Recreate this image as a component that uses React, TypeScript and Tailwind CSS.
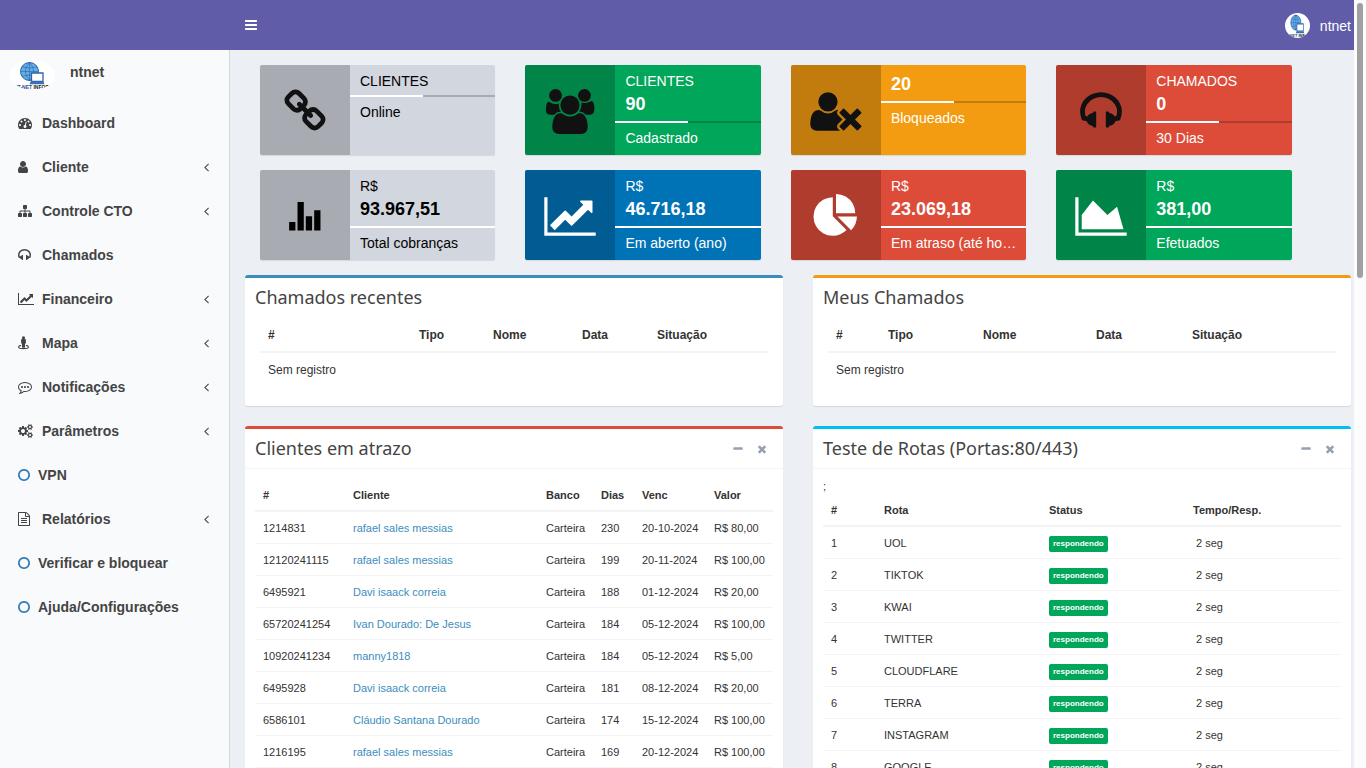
import type { ReactNode } from "react";
import clsx from "clsx";

// Font Awesome 4 glyphs, on a 1792 unit em
const glyphs = {
  bars: {
    box: "128 0 1536 1792",
    d: "M1664 1344v128q0 26-19 45t-45 19h-1408q-26 0-45-19t-19-45v-128q0-26 19-45t45-19h1408q26 0 45 19t19 45zm0-512v128q0 26-19 45t-45 19h-1408q-26 0-45-19t-19-45v-128q0-26 19-45t45-19h1408q26 0 45 19t19 45zm0-512v128q0 26-19 45t-45 19h-1408q-26 0-45-19t-19-45v-128q0-26 19-45t45-19h1408q26 0 45 19t19 45z",
  },
  dashboard: {
    box: "0 0 1792 1792",
    d: "M384 1152q0-53-37.5-90.5t-90.5-37.5-90.5 37.5-37.5 90.5 37.5 90.5 90.5 37.5 90.5-37.5 37.5-90.5zm192-448q0-53-37.5-90.5t-90.5-37.5-90.5 37.5-37.5 90.5 37.5 90.5 90.5 37.5 90.5-37.5 37.5-90.5zm428 481l101-382q6-26-7.5-48.5t-38.5-29.5-48 6.5-30 39.5l-101 382q-60 5-107 43.5t-63 98.5q-20 77 20 146t117 89 146-20 89-117q16-60-6-117t-72-91zm660-33q0-53-37.5-90.5t-90.5-37.5-90.5 37.5-37.5 90.5 37.5 90.5 90.5 37.5 90.5-37.5 37.5-90.5zm-640-640q0-53-37.5-90.5t-90.5-37.5-90.5 37.5-37.5 90.5 37.5 90.5 90.5 37.5 90.5-37.5 37.5-90.5zm448 192q0-53-37.5-90.5t-90.5-37.5-90.5 37.5-37.5 90.5 37.5 90.5 90.5 37.5 90.5-37.5 37.5-90.5zm320 448q0 261-141 483-19 29-54 29h-1402q-35 0-54-29-141-221-141-483 0-182 71-348t191-286 286-191 348-71 348 71 286 191 191 286 71 348z",
  },
  user: {
    box: "256 0 1280 1792",
    d: "M1536 1399q0 109-62.5 187t-150.5 78h-854q-88 0-150.5-78t-62.5-187q0-85 8.5-160.5t31.5-152 58.5-131 94-89 134.5-34.5q131 128 313 128t313-128q76 0 134.5 34.5t94 89 58.5 131 31.5 152 8.5 160.5zm-256-887q0 159-112.5 271.5t-271.5 112.5-271.5-112.5-112.5-271.5 112.5-271.5 271.5-112.5 271.5 112.5 112.5 271.5z",
  },
  sitemap: {
    box: "0 0 1792 1792",
    d: "M1792 1248v320q0 40-28 68t-68 28h-320q-40 0-68-28t-28-68v-320q0-40 28-68t68-28h96v-192h-512v192h96q40 0 68 28t28 68v320q0 40-28 68t-68 28h-320q-40 0-68-28t-28-68v-320q0-40 28-68t68-28h96v-192h-512v192h96q40 0 68 28t28 68v320q0 40-28 68t-68 28h-320q-40 0-68-28t-28-68v-320q0-40 28-68t68-28h96v-192q0-52 38-90t90-38h512v-192h-96q-40 0-68-28t-28-68v-320q0-40 28-68t68-28h320q40 0 68 28t28 68v320q0 40-28 68t-68 28h-96v192h512q52 0 90 38t38 90v192h96q40 0 68 28t28 68z",
  },
  headphones: {
    box: "64 0 1664 1792",
    d: "M1728 886q0 166-60 314l-20 49-185 33q-22 83-90.5 136.5t-156.5 53.5v32q0 14-9 23t-23 9h-64q-14 0-23-9t-9-23v-576q0-14 9-23t23-9h64q14 0 23 9t9 23v32q71 0 130 35.5t93 95.5l68-12q29-95 29-193 0-148-88-279t-236.5-209-315.5-78-315.5 78-236.5 209-88 279q0 98 29 193l68 12q34-60 93-95.5t130-35.5v-32q0-14 9-23t23-9h64q14 0 23 9t9 23v576q0 14-9 23t-23 9h-64q-14 0-23-9t-9-23v-32q-88 0-156.5-53.5t-90.5-136.5l-185-33-20-49q-60-148-60-314 0-151 67-291t179-242.5 266-163.5 320-61 320 61 266 163.5 179 242.5 67 291z",
  },
  lineChart: {
    box: "0 0 2048 1792",
    d: "M2048 1536v128h-2048v-1536h128v1408h1920zm-128-1248v435q0 21-19.5 29.5t-35.5-7.5l-121-121-633 633q-10 10-23 10t-23-10l-233-233-416 416-192-192 585-585q10-10 23-10t23 10l233 233 464-464-121-121q-16-16-7.5-35.5t29.5-19.5h435q14 0 23 9t9 23z",
  },
  areaChart: {
    box: "0 0 2048 1792",
    d: "M2048 1536v128h-2048v-1536h128v1408h1920zm-384-1024l256 896h-1664v-576l448-576 576 576z",
  },
  pieChart: {
    box: "0 0 1792 1792",
    d: "M768 890l546 546q-106 108-247.5 168t-298.5 60q-209 0-385.5-103t-279.5-279.5-103-385.5 103-385.5 279.5-279.5 385.5-103v762zm187 6h773q0 157-60 298.5t-168 247.5zm709-128h-768v-768q209 0 385.5 103t279.5 279.5 103 385.5z",
  },
  streetView: {
    box: "0 0 1408 1792",
    d: "M704 20a200 200 0 0 1 130 350h70q104 0 104 104v416q0 90-110 100v440q0 60-60 60h-268q-60 0-60-60v-440q-110-10-110-100v-416q0-104 104-104h70a200 200 0 0 1 130-350zM400 1130v140q-262 40-262 130 0 150 566 150t566-150q0-90-262-130v-140q400 60 400 270 0 282-704 282t-704-282q0-210 400-270z",
  },
  commenting: {
    box: "0 0 1792 1792",
    d: "M640 896q0 53-37.5 90.5t-90.5 37.5-90.5-37.5-37.5-90.5 37.5-90.5 90.5-37.5 90.5 37.5 37.5 90.5zm384 0q0 53-37.5 90.5t-90.5 37.5-90.5-37.5-37.5-90.5 37.5-90.5 90.5-37.5 90.5 37.5 37.5 90.5zm384 0q0 53-37.5 90.5t-90.5 37.5-90.5-37.5-37.5-90.5 37.5-90.5 90.5-37.5 90.5 37.5 37.5 90.5zm-512-512q-204 0-381.5 69.5t-282 187.5-104.5 255q0 112 71.5 213.5t201.5 175.5l87 50-27 96q-24 91-70 172 152-63 275-171l43-38 57 6q69 8 130 8 204 0 381.5-69.5t282-187.5 104.5-255-104.5-255-282-187.5-381.5-69.5zm896 512q0 174-120 321.5t-326 233-450 85.5q-70 0-145-8-198 175-460 242-49 14-114 22h-5q-15 0-27-10.5t-16-27.5v-1q-3-4-.5-12t2-10 4.5-9.5l6-9 7-8.5 8-9q7-8 31-34.5t34.5-38 31-39.5 32.5-51 27-59 26-76q-157-89-247.5-220t-90.5-281q0-174 120-321.5t326-233 450-85.5 450 85.5 326 233 120 321.5z",
  },
  cogs: {
    box: "0 0 1920 1792",
    d: "M896 896q0-106-75-181t-181-75-181 75-75 181 75 181 181 75 181-75 75-181zm768 512q0-52-38-90t-90-38-90 38-38 90q0 53 37.5 90.5t90.5 37.5 90.5-37.5 37.5-90.5zm0-1024q0-52-38-90t-90-38-90 38-38 90q0 53 37.5 90.5t90.5 37.5 90.5-37.5 37.5-90.5zm-384 421v185q0 10-7 19.5t-16 10.5l-155 24q-11 35-32 76 34 48 90 115 7 11 7 20 0 12-7 19-23 30-82.5 89.5t-78.5 59.5q-11 0-21-7l-115-90q-37 19-77 31-11 108-23 155-7 24-30 24h-186q-11 0-20-7.5t-10-17.5l-23-153q-34-10-75-31l-118 89q-7 7-20 7-11 0-21-8-144-133-144-160 0-9 7-19 10-14 41-53t47-61q-23-44-35-82l-152-24q-10-1-17-9.5t-7-19.5v-185q0-10 7-19.5t16-10.5l155-24q11-35 32-76-34-48-90-115-7-11-7-20 0-12 7-20 22-30 82-89t79-59q11 0 21 7l115 90q34-18 77-32 11-108 23-154 7-24 30-24h186q11 0 20 7.5t10 17.5l23 153q34 10 75 31l118-89q8-7 20-7 11 0 21 8 144 133 144 160 0 8-7 19-12 16-42 54t-45 60q23 48 34 82l152 23q10 2 17 10.5t7 19.5zm640 533v140q0 16-149 31-12 27-30 52 51 113 51 138 0 4-4 7-122 71-124 71-8 0-46-47t-52-68q-20 2-30 2t-30-2q-14 21-52 68t-46 47q-2 0-124-71-4-3-4-7 0-25 51-138-18-25-30-52-149-15-149-31v-140q0-16 149-31 13-29 30-52-51-113-51-138 0-4 4-7 4-2 35-20t59-34 30-16q8 0 46 46.5t52 67.5q20-2 30-2t30 2q51-71 92-112l6-2q4 0 124 70 4 3 4 7 0 25-51 138 17 23 30 52 149 15 149 31zm0-1024v140q0 16-149 31-12 27-30 52 51 113 51 138 0 4-4 7-122 71-124 71-8 0-46-47t-52-68q-20 2-30 2t-30-2q-14 21-52 68t-46 47q-2 0-124-71-4-3-4-7 0-25 51-138-18-25-30-52-149-15-149-31v-140q0-16 149-31 13-29 30-52-51-113-51-138 0-4 4-7 4-2 35-20t59-34 30-16q8 0 46 46.5t52 67.5q20-2 30-2t30 2q51-71 92-112l6-2q4 0 124 70 4 3 4 7 0 25-51 138 17 23 30 52 149 15 149 31z",
  },
  circle: {
    box: "128 0 1536 1792",
    d: "M896 352q-148 0-273 73t-198 198-73 273 73 273 198 198 273 73 273-73 198-198 73-273-73-273-198-198-273-73zm768 544q0 209-103 385.5t-279.5 279.5-385.5 103-385.5-103-279.5-279.5-103-385.5 103-385.5 279.5-279.5 385.5-103 385.5 103 279.5 279.5 103 385.5z",
  },
  fileText: {
    box: "128 0 1536 1792",
    d: "M1596 380q28 28 48 76t20 88v1152q0 40-28 68t-68 28h-1344q-40 0-68-28t-28-68v-1600q0-40 28-68t68-28h896q40 0 88 20t76 48zm-444-244v376h376q-10-29-22-41l-313-313q-12-12-41-22zm384 1528v-1024h-416q-40 0-68-28t-28-68v-416h-768v1536h1280zm-1024-864q0-14 9-23t23-9h704q14 0 23 9t9 23v64q0 14-9 23t-23 9h-704q-14 0-23-9t-9-23v-64zm736 224q14 0 23 9t9 23v64q0 14-9 23t-23 9h-704q-14 0-23-9t-9-23v-64q0-14 9-23t23-9h704zm0 256q14 0 23 9t9 23v64q0 14-9 23t-23 9h-704q-14 0-23-9t-9-23v-64q0-14 9-23t23-9h704z",
  },
  link: {
    box: "64 0 1664 1792",
    d: "M1520 1216q0-40-28-68l-208-208q-28-28-68-28-42 0-72 32 3 3 19 18.5t21.5 21.5 15 19 13 25.5 3.5 27.5q0 40-28 68t-68 28q-15 0-27.5-3.5t-25.5-13-19-15-21.5-21.5-18.5-19q-33 31-33 73 0 40 28 68l206 207q27 27 68 27 40 0 68-26l147-146q28-28 28-67zm-703-705q0-40-28-68l-206-207q-28-28-68-28-39 0-68 27l-147 146q-28 28-28 67 0 40 28 68l208 208q27 27 68 27 42 0 72-31-3-3-19-18.5t-21.5-21.5-15-19-13-25.5-3.5-27.5q0-40 28-68t68-28q15 0 27.5 3.5t25.5 13 19 15 21.5 21.5 18.5 19q33-31 33-73zm895 705q0 120-85 203l-147 146q-83 83-203 83-121 0-204-85l-206-207q-83-83-83-203 0-123 88-209l-88-88q-86 88-208 88-120 0-204-84l-208-208q-84-84-84-204t85-203l147-146q83-83 203-83 121 0 204 85l206 207q83 83 83 203 0 123-88 209l88 88q86-88 208-88 120 0 204 84l208 208q84 84 84 204z",
  },
  users: {
    box: "0 0 1920 1792",
    d: "M593 896q-162 5-265 128h-134q-82 0-138-40.5t-56-118.5q0-353 124-353 6 0 43.5 21t97.5 42.5 119 21.5q67 0 133-23-5 37-5 66 0 159 93 293zm1071 637q0 120-73 189.5t-194 69.5h-874q-121 0-194-69.5t-73-189.5q0-53 3.5-103.5t14-109 26.5-108.5 43-97.5 62-81 85.5-53.5 111.5-20q10 0 43 21.5t73 48 107 48 135 21.5 135-21.5 107-48 73-48 43-21.5q61 0 111.5 20t85.5 53.5 62 81 43 97.5 26.5 108.5 14 109 3.5 103.5zm-1024-1277q0 106-75 181t-181 75-181-75-75-181 75-181 181-75 181 75 75 181zm704 384q0 159-112.5 271.5t-271.5 112.5-271.5-112.5-112.5-271.5 112.5-271.5 271.5-112.5 271.5 112.5 112.5 271.5zm576 225q0 78-56 118.5t-138 40.5h-134q-103-123-265-128 93-134 93-293 0-29-5-66 66 23 133 23 59 0 119-21.5t97.5-42.5 43.5-21q124 0 124 353zm-128-609q0 106-75 181t-181 75-181-75-75-181 75-181 181-75 181 75 75 181z",
  },
  userTimes: {
    box: "0 0 2048 1792",
    d: "M704 896q-159 0-271.5-112.5t-112.5-271.5 112.5-271.5 271.5-112.5 271.5 112.5 112.5 271.5-112.5 271.5-271.5 112.5zm1077 320l249 249q9 9 9 23 0 13-9 22l-136 136q-9 9-22 9-14 0-23-9l-249-249-249 249q-9 9-23 9-13 0-22-9l-136-136q-9-9-9-22 0-14 9-23l249-249-249-249q-9-9-9-23 0-13 9-22l136-136q9-9 22-9 14 0 23 9l249 249 249-249q9-9 23-9 13 0 22 9l136 136q9 9 9 22 0 14-9 23zm-498 0l-181 181q-37 37-37 91 0 53 37 90l83 83q-21 3-44 3h-874q-121 0-194-69t-73-190q0-53 3.5-103.5t14-109 26.5-108.5 43-97.5 62-81 85.5-53.5 111.5-20q19 0 39 17 154 122 319 122t319-122q20-17 39-17 28 0 57 6-28 27-41 50t-13 56q0 54 37 91z",
  },
  statsBars: {
    box: "0 0 1792 1792",
    d: "M264 1116h250v342h-250zM598 318h250v1140h-250zM928 888h250v570h-250zM1262 648h250v810h-250z",
  },
  angleLeft: {
    box: "582 0 640 1792",
    d: "M1203 544q0 13-10 23l-393 393 393 393q10 10 10 23t-10 23l-50 50q-10 10-23 10t-23-10l-466-466q-10-10-10-23t10-23l466-466q10-10 23-10t23 10l50 50q10 10 10 23z",
  },
  minus: {
    box: "0 0 1792 1792",
    d: "M1600 736v192q0 40-28 68t-68 28h-1216q-40 0-68-28t-28-68v-192q0-40 28-68t68-28h1216q40 0 68 28t28 68z",
  },
  times: {
    box: "0 0 1792 1792",
    d: "M1490 1322q0 40-28 68l-136 136q-28 28-68 28t-68-28l-294-294-294 294q-28 28-68 28t-68-28l-136-136q-28-28-28-68t28-68l294-294-294-294q-28-28-28-68t28-68l136-136q28-28 68-28t68 28l294 294 294-294q28-28 68-28t68 28l136 136q28 28 28 68t-28 68l-294 294 294 294q28 28 28 68z",
  },
};

type Glyph = keyof typeof glyphs;

function Icon({ name, className, left }: { name: Glyph; className?: string; left?: boolean }) {
  return (
    <svg
      viewBox={glyphs[name].box}
      preserveAspectRatio={left ? "xMinYMid meet" : "xMidYMid meet"}
      className={clsx("shrink-0 overflow-visible fill-current", className)}
      aria-hidden="true"
    >
      <path d={glyphs[name].d} />
    </svg>
  );
}

function GlobeAndLaptop() {
  return (
    <g>
      <circle cx="19.5" cy="11.5" r="9" fill="#62b0e8" stroke="#2d62a3" strokeWidth="1" />
      <path
        d="M19.5 2.5v18M10.5 11.5h18M12 6.8q7.5 2.4 15 0M12 16.2q7.5-2.4 15 0M19.5 2.5q-8.500 9 0 18M19.5 2.5q8.5 9 0 18"
        fill="none"
        stroke="#2d62a3"
        strokeWidth="0.6"
      />
      <path d="M21.5 13h11.5v8.5h-11.5z" fill="#fff" stroke="#2f64ae" strokeWidth="1.3" />
      <path d="M20.5 21.8h13l1 2.400h-15z" fill="#3a70b8" />
    </g>
  );
}

const navItems: { label: string; icon: Glyph; tree?: boolean }[] = [
  { label: "Dashboard", icon: "dashboard" },
  { label: "Cliente", icon: "user", tree: true },
  { label: "Controle CTO", icon: "sitemap", tree: true },
  { label: "Chamados", icon: "headphones" },
  { label: "Financeiro", icon: "lineChart", tree: true },
  { label: "Mapa", icon: "streetView", tree: true },
  { label: "Notificações", icon: "commenting", tree: true },
  { label: "Parâmetros", icon: "cogs", tree: true },
  { label: "VPN", icon: "circle" },
  { label: "Relatórios", icon: "fileText", tree: true },
  { label: "Verificar e bloquear", icon: "circle" },
  { label: "Ajuda/Configurações", icon: "circle" },
];

interface InfoCard {
  icon: Glyph;
  title?: string;
  value?: string;
  description: string;
  color: string;
  iconColor: string;
  progress: string;
}

const infoCards: InfoCard[] = [
  { icon: "link", title: "CLIENTES", description: "Online", color: "bg-[#d2d6de] text-black", iconColor: "text-[#111]", progress: "w-1/2" },
  { icon: "users", title: "CLIENTES", value: "90", description: "Cadastrado", color: "bg-[#00a65a] text-white", iconColor: "text-[#111]", progress: "w-1/2" },
  { icon: "userTimes", value: "20", description: "Bloqueados", color: "bg-[#f39c12] text-white", iconColor: "text-[#111]", progress: "w-1/2" },
  { icon: "headphones", title: "CHAMADOS", value: "0", description: "30 Dias", color: "bg-[#dd4b39] text-white", iconColor: "text-[#111]", progress: "w-1/2" },
  { icon: "statsBars", title: "R$", value: "93.967,51", description: "Total cobranças", color: "bg-[#d2d6de] text-black", iconColor: "text-black", progress: "w-full" },
  { icon: "lineChart", title: "R$", value: "46.716,18", description: "Em aberto (ano)", color: "bg-[#0073b7] text-white", iconColor: "text-white", progress: "w-full" },
  { icon: "pieChart", title: "R$", value: "23.069,18", description: "Em atraso (até hoje)", color: "bg-[#dd4b39] text-white", iconColor: "text-white", progress: "w-full" },
  { icon: "areaChart", title: "R$", value: "381,00", description: "Efetuados", color: "bg-[#00a65a] text-white", iconColor: "text-white", progress: "w-full" },
];

const overdue = [
  ["1214831", "rafael sales messias", "Carteira", "230", "20-10-2024", "R$ 80,00"],
  ["12120241115", "rafael sales messias", "Carteira", "199", "20-11-2024", "R$ 100,00"],
  ["6495921", "Davi isaack correia", "Carteira", "188", "01-12-2024", "R$ 20,00"],
  ["65720241254", "Ivan Dourado: De Jesus", "Carteira", "184", "05-12-2024", "R$ 100,00"],
  ["10920241234", "manny1818", "Carteira", "184", "05-12-2024", "R$ 5,00"],
  ["6495928", "Davi isaack correia", "Carteira", "181", "08-12-2024", "R$ 20,00"],
  ["6586101", "Cláudio Santana Dourado", "Carteira", "174", "15-12-2024", "R$ 100,00"],
  ["1216195", "rafael sales messias", "Carteira", "169", "20-12-2024", "R$ 100,00"],
];

const routes = ["UOL", "TIKTOK", "KWAI", "TWITTER", "CLOUDFLARE", "TERRA", "INSTAGRAM", "GOOGLE"];

function Navbar() {
  return (
    <header className="flex h-[50px] shrink-0 items-center bg-[#605ca8] pr-[3px] pl-[245px] text-white">
      <button type="button" aria-label="Menu">
        <Icon name="bars" className="h-3.5 w-3" />
      </button>
      <a href="#perfil" className="ml-auto flex items-center gap-2.5 pt-px text-sm">
        <svg viewBox="0 0 25 25" className="size-[25px] rounded-full bg-white" aria-hidden="true">
          <svg width="25" height="25" viewBox="0 0 45 30" preserveAspectRatio="none">
            <GlobeAndLaptop />
          </svg>
          <text x="3" y="24" fontSize="4" fontWeight="700" fill="#2b4f86">
            -NET <tspan fill="#222">INF</tspan>
          </text>
        </svg>
        ntnet
      </a>
    </header>
  );
}

function Sidebar() {
  return (
    <aside className="w-[230px] shrink-0 border-r border-[#d2d6de] bg-[#f9fafc] text-sm font-bold text-[#444]">
      <div className="flex h-[51px] gap-[15px] px-2.5 pt-2.5">
        <svg viewBox="0 0 45 30" className="h-[30px] w-[45px] rounded-[50%] bg-white" aria-hidden="true">
          <GlobeAndLaptop />
          <text x="4" y="29" fontSize="5" fontWeight="700" fill="#2b4f86">
            NT-NET <tspan fill="#222">INFORM</tspan>
          </text>
        </svg>
        <p className="leading-6">ntnet</p>
      </div>
      <nav>
        {navItems.map((item) => (
          <a key={item.label} href="#" className="flex h-11 items-center pr-5 pl-[18px]">
            <Icon
              name={item.icon}
              left
              className={clsx("h-3.5 w-5", item.icon === "circle" ? "text-[#337ab7]" : "mr-1")}
            />
            <span>{item.label}</span>
            {item.tree && <Icon name="angleLeft" className="ml-auto h-3.5 w-[5px]" />}
          </a>
        ))}
      </nav>
    </aside>
  );
}

function InfoBox({ card }: { card: InfoCard }) {
  return (
    <div className={clsx("flex h-[90px] overflow-hidden rounded-xs shadow-[0_1px_1px_rgba(0,0,0,0.1)]", card.color)}>
      <div className={clsx("flex w-[90px] shrink-0 items-center justify-center bg-black/20 pt-0.5", card.iconColor)}>
        <Icon name={card.icon} className="h-[45px] w-[52px]" />
      </div>
      <div className="min-w-0 flex-1 px-2.5 pt-1.5 text-sm leading-5">
        {card.title && <p className="truncate">{card.title}</p>}
        {card.value && <p className="text-lg leading-[26px] font-bold">{card.value}</p>}
        <div className="-mx-2.5 mt-1 mb-[5px] h-0.5 bg-black/20">
          <div className={clsx("h-full bg-white", card.progress)} />
        </div>
        <p className="truncate">{card.description}</p>
      </div>
    </div>
  );
}

function Panel({ title, border, tools, children }: { title: string; border: string; tools?: boolean; children: ReactNode }) {
  return (
    <section className={clsx("rounded-[3px] border-t-[3px] bg-white shadow-[0_1px_1px_rgba(0,0,0,0.1)]", border)}>
      <div className={clsx("flex items-center justify-between py-2.5 pr-[9px] pl-2.5", tools && "border-b border-[#f4f4f4]")}>
        <h3 className="font-['Noto_Sans',sans-serif] text-lg leading-[19px] text-[#444]">{title}</h3>
        {tools && (
          <div className="flex text-[#97a0b3]">
            <button type="button" aria-label="Minimizar" className="flex w-6 justify-center">
              <Icon name="minus" className="size-3" />
            </button>
            <button type="button" aria-label="Fechar" className="flex w-6 justify-center">
              <Icon name="times" className="size-3" />
            </button>
          </div>
        )}
      </div>
      {children}
    </section>
  );
}

function HeadRow({ columns }: { columns: [string, string][] }) {
  return (
    <thead>
      <tr>
        {columns.map(([label, width]) => (
          <th key={label} className={clsx("border-b-2 border-[#f4f4f4] px-2 pt-[9px] pb-[7px] text-left font-bold", width)}>
            {label}
          </th>
        ))}
      </tr>
    </thead>
  );
}

function EmptyTable({ columns }: { columns: [string, string][] }) {
  return (
    <div className="px-[15px] pt-px pb-5">
      <table className="w-full table-fixed border-separate border-spacing-0 text-xs leading-[17px] text-[#333]">
        <HeadRow columns={columns} />
        <tbody>
          <tr>
            <td colSpan={5} className="px-2 pt-[9px] pb-[7px]">Sem registro</td>
          </tr>
        </tbody>
      </table>
    </div>
  );
}

const tableClass =
  "w-full table-fixed border-separate border-spacing-0 text-[11px] leading-[15px] whitespace-nowrap text-[#333]";
const cellClass = "border-b border-[#f4f4f4] px-2 pt-[9px] pb-[7px]";

export default function App() {
  return (
    <div className="flex h-screen overflow-hidden bg-[#ecf0f5] font-['Liberation_Sans',Arial,sans-serif]">
      <div className="flex min-w-0 flex-1 flex-col">
        <Navbar />
        <div className="flex min-h-0 flex-1">
          <Sidebar />
          <main className="min-w-0 flex-1 overflow-hidden pt-[15px] pr-[3px] pl-[15px]">
            <div className="grid w-[96%] grid-cols-4 gap-x-[30px] gap-y-[15px] px-[15px]">
              {infoCards.map((card) => (
                <InfoBox key={card.description} card={card} />
              ))}
            </div>

            <div className="mt-[15px] grid grid-cols-2 gap-x-[30px] gap-y-5">
              <Panel title="Chamados recentes" border="border-[#3c8dbc]">
                <EmptyTable
                  columns={[
                    ["#", "w-[151px]"],
                    ["Tipo", "w-[74px]"],
                    ["Nome", "w-[89px]"],
                    ["Data", "w-[75px]"],
                    ["Situação", "w-[119px]"],
                  ]}
                />
              </Panel>

              <Panel title="Meus Chamados" border="border-[#f39c12]">
                <EmptyTable
                  columns={[
                    ["#", "w-[52px]"],
                    ["Tipo", "w-[95px]"],
                    ["Nome", "w-[113px]"],
                    ["Data", "w-[96px]"],
                    ["Situação", "w-[152px]"],
                  ]}
                />
              </Panel>

              <Panel title="Clientes em atrazo" border="border-[#dd4b39]" tools>
                <div className="p-2.5">
                  <table className={tableClass}>
                    <HeadRow
                      columns={[
                        ["#", "w-[90px]"],
                        ["Cliente", "w-[193px]"],
                        ["Banco", "w-[55px]"],
                        ["Dias", "w-[41px]"],
                        ["Venc", "w-[72px]"],
                        ["Valor", "w-[67px]"],
                      ]}
                    />
                    <tbody>
                      {overdue.map(([id, client, bank, days, due, amount]) => (
                        <tr key={id}>
                          <td className={cellClass}>{id}</td>
                          <td className={cellClass}>
                            <a href="#" className="text-[#3c8dbc]">{client}</a>
                          </td>
                          <td className={cellClass}>{bank}</td>
                          <td className={cellClass}>{days}</td>
                          <td className={cellClass}>{due}</td>
                          <td className={cellClass}>{amount}</td>
                        </tr>
                      ))}
                    </tbody>
                  </table>
                </div>
              </Panel>

              <Panel title="Teste de Rotas (Portas:80/443)" border="border-[#00c0ef]" tools>
                <div className="p-2.5">
                  <p className="text-[11px] leading-[15px] text-[#333]">;</p>
                  <table className={tableClass}>
                    <HeadRow
                      columns={[
                        ["#", "w-[53px]"],
                        ["Rota", "w-[165px]"],
                        ["Status", "w-[144px]"],
                        ["Tempo/Resp.", "w-[156px]"],
                      ]}
                    />
                    <tbody>
                      {routes.map((route, i) => (
                        <tr key={route}>
                          <td className={cellClass}>{i + 1}</td>
                          <td className={cellClass}>{route}</td>
                          <td className="border-b border-[#f4f4f4] px-2 pt-[9px] pb-1.5">
                            <span className="block h-4 w-fit rounded-xs bg-[#00a65a] px-1 text-[8px] leading-4 font-bold text-white">
                              respondendo
                            </span>
                          </td>
                          <td className={cellClass}>&nbsp;2 seg</td>
                        </tr>
                      ))}
                    </tbody>
                  </table>
                </div>
              </Panel>
            </div>
          </main>
        </div>
      </div>

      {/* scroll track */}
      <div className="w-3 shrink-0 bg-[#fcfcfc] px-[3px] pt-[3px]">
        <div className="h-[36%] rounded-full bg-[#a0a0a0]" />
      </div>
    </div>
  );
}
